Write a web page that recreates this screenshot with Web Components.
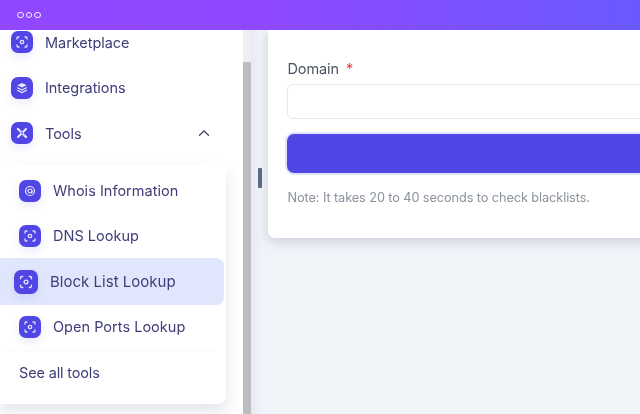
<!doctype html>
<html><head><meta charset="utf-8"><style>
html,body{margin:0;padding:0;width:640px;height:414px;overflow:hidden;font-family:Inter,"Noto Sans",sans-serif}
</style></head><body>
<app-shell>
  <side-nav slot="side">
    <nav-row label="Marketplace" icon="scan" first></nav-row>
    <nav-row label="Integrations" icon="layers"></nav-row>
    <nav-row label="Tools" icon="tools" chevron></nav-row>
    <tools-menu>
      <menu-row label="Whois Information" icon="whois"></menu-row>
      <menu-row label="DNS Lookup" icon="scan"></menu-row>
      <menu-row label="Block List Lookup" icon="scan" active></menu-row>
      <menu-row label="Open Ports Lookup" icon="scan"></menu-row>
      <span slot="footer">See all tools</span>
    </tools-menu>
  </side-nav>
  <domain-card slot="main"></domain-card>
</app-shell>
<script>
const ICONS={
scan:'<g fill="none" stroke="#fff" stroke-width="1.300" stroke-linecap="round" opacity=".85"><path d="M5 7V6a1 1 0 0 1 1-1h1M13 5h1a1 1 0 0 1 1 1v1M15 13v1a1 1 0 0 1-1 1h-1M7 15H6a1 1 0 0 1-1-1v-1"/><circle cx="10" cy="10" r="1.700"/></g>',
layers:'<g opacity=".88"><path d="M10 5 14.600 7.300 10 9.600 5.400 7.300Z" fill="#fff"/><path d="M5.500 9.800 10 12 14.500 9.800M5.500 12.300 10 14.600 14.500 12.300" fill="none" stroke="#fff" stroke-width="1.200" stroke-linecap="round" stroke-linejoin="round"/></g>',
tools:'<g opacity=".9" stroke-linecap="round"><path d="M6 6 14 14" stroke="#fff" stroke-width="2.400"/><path d="M14 6 6 14" stroke="#fff" stroke-width="2"/><circle cx="8" cy="8" r=".6" fill="#4f46e5"/><circle cx="12" cy="12" r=".6" fill="#4f46e5"/><circle cx="10" cy="10" r=".9" fill="#4f46e5"/></g>',
whois:'<g fill="none" stroke="#fff" stroke-width="1.200" opacity=".88"><circle cx="10" cy="10" r="4.500"/><circle cx="10" cy="10" r="2"/><path d="M12 10v2"/></g>'};
function def(name,css,html){
  customElements.define(name,class extends HTMLElement{
    connectedCallback(){
      if(this.shadowRoot)return;
      const r=this.attachShadow({mode:'open'});
      r.innerHTML='<style>'+css+'</style>'+(typeof html==='function'?html(this):html);
    }
  });
}
def('tile-icon',
 ':host{display:block;width:var(--tile,22px);height:var(--tile,22px);flex:none;border-radius:7px;background:#4f46e5;box-shadow:0 4px 8px rgba(79,70,229,.12)}svg{display:block;width:100%;height:100%}',
 e=>'<svg viewBox="-1 -1 22 22">'+ICONS[e.getAttribute('name')]+'</svg>');
def('app-shell',
 ':host{display:grid;grid-template-columns:243px 8px 1fr;grid-template-rows:30px 384px;width:640px;height:414px;overflow:hidden;background:#f0f3f8;filter:blur(.3px)}'+
 '.bar{grid-column:1/-1;background:linear-gradient(90deg,#9147ff 0%,#8f48ff 40%,#6a59ff 100%);display:flex;align-items:center;gap:2px;padding:0 0 0 17px;position:relative;z-index:2}'+
 '.bar i{width:6.500px;height:6.500px;box-sizing:border-box;border:1.400px solid #fff;border-radius:50%;opacity:.92}'+
 '.track{background:#efefef;display:flex;flex-direction:column}.track::before{content:"";height:32px}.track::after{content:"";flex:1;background:#bdbdbd}'+
 '.main{display:flex;align-items:flex-start;overflow:hidden;min-width:0;position:relative}'+
 '.gut{width:17px;flex:none;align-self:stretch;display:flex;justify-content:center;padding-top:138px;box-sizing:border-box;background:linear-gradient(90deg,#e6ebf3,#f0f3f8 60%)}'+
 '.gut b{width:4px;height:20px;background:#5d6a84;border-radius:1px;margin-left:1px}',
 '<div class="bar"><i></i><i></i><i></i></div><slot name="side"></slot><div class="track"></div><div class="main"><div class="gut"><b></b></div><slot name="main"></slot></div>');
def('side-nav',
 ':host{display:block;background:#fff;overflow:hidden;position:relative;color:#3b3a7a;font-size:14px}',
 '<slot></slot>');
def('nav-row',
 ':host{display:flex;align-items:center;height:45.500px;padding:0 32px 0 11px;box-sizing:border-box;font-size:14.500px;color:#3f3d78;letter-spacing:-.05px}'+
 ':host([first]){margin-top:-10.500px}'+
 'span{margin-left:12px;flex:1}svg{width:14px;height:14px;display:block}',
 e=>'<tile-icon name="'+e.getAttribute('icon')+'"></tile-icon><span>'+e.getAttribute('label')+'</span>'+
 (e.hasAttribute('chevron')?'<svg viewBox="0 0 14 14"><path d="M2.500 9.300 7 5l4.500 4.300" fill="none" stroke="#43476b" stroke-width="1.200" stroke-linecap="round" stroke-linejoin="round"/></svg>':''));
def('tools-menu',
 ':host{display:block;width:226px;height:239px;margin-top:9px;box-sizing:border-box;padding-top:3px;background:#fff;border-radius:0 0 8px 0;box-shadow:0 8px 16px rgba(60,70,110,.14)}'+
 '.list{display:flex;flex-direction:column}'+
 '.foot{margin:0 10px 0 5px;border-top:1px solid #f6f7f9;height:44px;padding-left:14px;display:flex;align-items:center;font-size:14.500px;color:#3f3d78;letter-spacing:-.15px;position:relative;top:-.5px}',
 '<div class="list"><slot></slot></div><div class="foot"><slot name="footer"></slot></div>');
def('menu-row',
 ':host{display:flex;align-items:center;height:45.500px;padding-left:19px;width:224px;box-sizing:border-box;font-size:14.500px;color:#3f3d78;letter-spacing:.02px}'+
 ':host([active]){background:#e0e7fd;border-radius:0 8px 8px 0;height:47px;margin:-1px 0 -.500px;padding-left:14px;--tile:24px;font-size:15px}'+
 'span{margin-left:12px;position:relative;top:-.5px}',
 e=>'<tile-icon name="'+e.getAttribute('icon')+'"></tile-icon><span>'+e.getAttribute('label')+'</span>');
def('domain-card',
 ':host{display:block;width:420px;height:208px;flex:none;box-sizing:border-box;padding:31px 0 0 20px;background:#fff;border-radius:0 0 0 7px;box-shadow:0 4px 12px rgba(60,70,110,.2);font-size:14.500px;color:#4b5563}'+
 'label{display:block;height:23px;line-height:16px;margin-left:-.5px;letter-spacing:-.1px}em{color:#ef4444;font-style:normal;margin-left:3px}'+
 '.in{height:34.500px;box-sizing:border-box;margin-left:-1px;border:1px solid #e6e7eb;border-radius:6px;background:#fff}'+
 '.btn{height:39px;margin:15.500px 0 0 -1px;background:#4f46e5;border-radius:7px 0 0 7px;box-shadow:0 0 0 2px #e0e4fb}'+
 'p{margin:17px 0 0 -.5px;font-size:12.750px;line-height:16px;color:#8b929e;letter-spacing:-.1px}',
 '<label>Domain <em>*</em></label><div class="in"></div><div class="btn"></div><p>Note: It takes 20 to 40 seconds to check blacklists.</p>');
</script>
</body></html>
